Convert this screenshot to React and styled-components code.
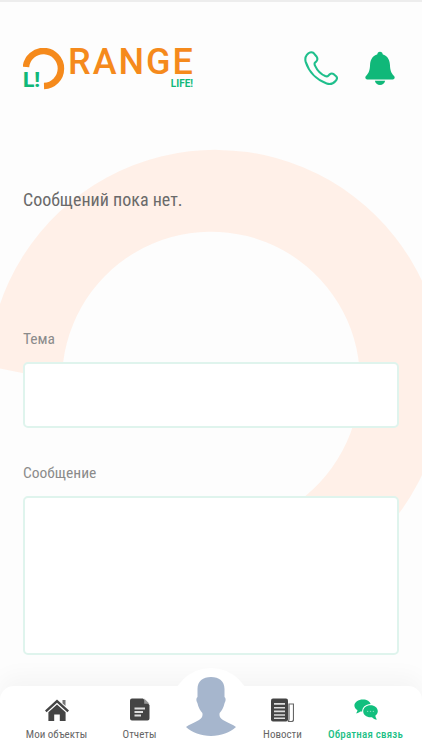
import React from 'react';
import styled, { createGlobalStyle } from 'styled-components';

const GREEN = '#10b879';
const ORANGE = '#f58a1c';

const GlobalStyle = createGlobalStyle`
  html, body {
    margin: 0;
    padding: 0;
    background: #fdfdfd;
  }
  * {
    box-sizing: border-box;
  }
`;

const Page = styled.div`
  position: relative;
  width: 422px;
  height: 750px;
  overflow: hidden;
  display: flex;
  flex-direction: column;
  background: #fdfdfd;
  border-top: 2px solid #ededed;
  font-family: "Roboto", sans-serif;
  font-stretch: 75%;
`;

const Ring = styled.svg`
  position: absolute;
  top: -2px;
  left: 0;
`;

const Header = styled.header`
  position: relative;
  display: flex;
  justify-content: space-between;
  align-items: flex-start;
  padding: 46px 27px 0 23px;
  height: 186px;
`;

const Logo = styled.div`
  position: relative;
  width: 170px;
  height: 42px;
  padding-left: 45px;
`;

const LogoRing = styled.svg`
  position: absolute;
  top: 0;
  left: 0;
`;

const LogoBadge = styled.span`
  position: absolute;
  left: 0;
  top: 23px;
  font: 800 21px/18px "Roboto", sans-serif;
  color: ${GREEN};
`;

const LogoWord = styled.div`
  font: 500 36px/28px "Roboto", sans-serif;
  letter-spacing: 2px;
  color: ${ORANGE};
`;

const LogoSub = styled.div`
  font: 700 10px/10px "Roboto", sans-serif;
  color: ${GREEN};
  text-align: right;
  margin-top: 3px;
`;

const HeaderActions = styled.div`
  display: flex;
  align-items: center;
  gap: 27px;
  padding-top: 2px;
`;

const Main = styled.main`
  position: relative;
  flex: 1;
  padding: 0 23px;
  min-height: 0;
`;

const Notice = styled.p`
  margin: 0 0 118px;
  height: 24px;
  font-size: 18px;
  line-height: 24px;
  color: #6a6a6a;
`;

const Field = styled.div`
  margin-bottom: 36px;
`;

const Label = styled.label`
  display: block;
  margin-bottom: 14px;
  font-size: 15.5px;
  line-height: 18px;
  color: #8b8b8b;
`;

const Input = styled.div`
  width: 376px;
  height: ${props => props.$height}px;
  background: #fff;
  border: 2px solid #dff4ed;
  border-radius: 5px;
`;

const Nav = styled.nav`
  position: relative;
  display: flex;
  justify-content: center;
  height: 64px;
  padding: 0 15px;
  background: #fff;
  border-radius: 14px 14px 0 0;
  box-shadow: 0 -10px 22px rgba(0, 0, 0, 0.035);
`;

const NavItem = styled.div`
  width: 83px;
  display: flex;
  flex-direction: column;
  align-items: center;
  justify-content: flex-end;
  padding-bottom: 9px;
  font-size: 11px;
  line-height: 12px;
  white-space: nowrap;
  color: ${props => (props.$active ? '#1cbf86' : '#666')};
  font-weight: ${props => (props.$active ? 500 : 400)};
  letter-spacing: ${props => (props.$active ? '0.2px' : '0')};
`;

const NavIcon = styled.div`
  height: 25px;
  margin-bottom: 7px;
  display: flex;
  align-items: center;
  justify-content: center;
`;

const AvatarSlot = styled.div`
  width: 60px;
`;

const AvatarBump = styled.div`
  position: absolute;
  left: 171px;
  top: -18px;
  width: 80px;
  height: 80px;
  border-radius: 50%;
  background: #fff;
  display: flex;
  justify-content: center;
  padding-top: 9px;
`;

const PhoneIcon = () => (
  <svg width="34" height="37" viewBox="0 0 36 38" fill="none" stroke="#1fbf8c" strokeWidth="2.2" strokeLinejoin="round">
    <path d="M3 4.5 C5 2 8 1 10 2.5 L13 6 C14.5 8 14.5 10 13 11.5 L11.5 13 C11 14 11 15 11.8 16.2 C14 21 18 25 22.5 27 C24 27.6 25 27.4 26 26.4 L27.2 25.2 C28.6 24 30 24 31.5 25 L34 27.2 C35.2 28.4 35 30.5 33.4 32.2 C31 35 27.5 36 24 34.8 C13 31 5 22 1.8 12 C1 9 1.4 6.5 3 4.5 Z" />
  </svg>
);

const BellIcon = () => (
  <svg width="30" height="35" viewBox="0 0 32 36" fill={GREEN}>
    <circle cx="16" cy="3" r="2.8" />
    <path d="M16 2.5 C23 2.5 26.4 8 26.6 14 C26.8 20 28 23 31 26 C32.3 27.4 31.6 29.6 29.6 29.6 H2.4 C0.4 29.6 -0.3 27.4 1 26 C4 23 5.2 20 5.4 14 C5.6 8 9 2.5 16 2.5 Z" />
    <path d="M10.5 31 H21.5 C21 33.8 18.8 35.5 16 35.5 C13.2 35.5 11 33.8 10.5 31 Z" />
  </svg>
);

const HomeIcon = () => (
  <svg width="24" height="22" viewBox="0 0 24 22" fill="#444">
    <path d="M12 0.5 L24 11.5 L22.4 13.2 L12 3.8 L1.6 13.2 L0 11.5 Z" />
    <path d="M17.5 1 H20.5 V7 L17.5 4.2 Z" fill="#777" />
    <path d="M12 5.6 L20.6 13.3 V22 H14.8 V15.4 H9.2 V22 H3.4 V13.3 Z" />
  </svg>
);

const FileIcon = () => (
  <svg width="20" height="23" viewBox="0 0 20 23">
    <path d="M2 0.5 H13 L19.5 7 V20.5 A2 2 0 0 1 17.5 22.5 H2 A2 2 0 0 1 0 20.5 V2.5 A2 2 0 0 1 2 0.5 Z" fill="#444" />
    <path d="M14.2 0.5 L19.5 5.8 H14.2 Z" fill="#999" />
    <path d="M4.5 9.5 H15 V11.4 H4.5 Z M4.5 13 H13 V14.9 H4.5 Z M4.5 16.5 H11 V18.4 H4.5 Z" fill="#ddd" />
  </svg>
);

const NewsIcon = () => (
  <svg width="23" height="24" viewBox="0 0 23 24">
    <rect x="0" y="0.5" width="17" height="23" rx="2" fill="#444" />
    <path d="M3 5 H14 V6.8 H3 Z M3 9 H14 V10.6 H3 Z M3 12.6 H14 V14.2 H3 Z M3 16.2 H14 V17.8 H3 Z M3 19.4 H14 V21 H3 Z" fill="#ddd" />
    <path d="M18 6 H22.5 V21.5 A2 2 0 0 1 20.5 23.5 H17 C18 23 18 22 18 21 Z" fill="none" stroke="#666" strokeWidth="1.2" />
  </svg>
);

const ChatIcon = () => (
  <svg width="24" height="22" viewBox="0 0 24 22" fill="#12bf7e">
    <path d="M9 0.5 C13 0.5 16 2.5 16.6 5 C11.5 5.2 8 8.6 8.2 12.6 C7.6 12.6 7 12.5 6.4 12.4 C5 13.6 3.5 14.2 2 14.2 C3 13.2 3.4 12.2 3.4 11 C1.4 9.8 0.4 8.2 0.4 6.4 C0.4 3.2 4.2 0.5 9 0.5 Z" />
    <path d="M16.5 6.2 C20.6 6.2 23.8 8.8 23.8 12.2 C23.8 14 22.8 15.6 21.4 16.6 C21.4 18 21.9 19.4 23 20.6 C21 20.4 19.4 19.6 18 18.2 C17.5 18.3 17 18.3 16.5 18.3 C12.4 18.3 9.2 15.6 9.2 12.2 C9.2 8.8 12.4 6.2 16.5 6.2 Z" />
    <circle cx="13.6" cy="12.4" r="0.7" fill="#7fdcb8" />
    <circle cx="16.5" cy="12.4" r="0.7" fill="#7fdcb8" />
    <circle cx="19.4" cy="12.4" r="0.7" fill="#7fdcb8" />
  </svg>
);

const AvatarIcon = () => (
  <svg width="50" height="59" viewBox="0 0 50 59" fill="#a6b6cd">
    <path d="M25 0 C33 0 38.5 4 38.5 12 V20 C40 21 40 24 38.6 26 C37.6 31 35.6 33.8 33.6 36 C33 39 34 41 37 43 C42 46 47 47.5 50 50 C44 55.5 35 59 25 59 C15 59 6 55.5 0 50 C3 47.5 8 46 13 43 C16 41 17 39 16.4 36 C14.4 33.8 12.4 31 11.4 26 C10 24 10 21 11.5 20 V12 C11.5 4 17 0 25 0 Z" />
  </svg>
);

const navLeft = [
  { label: 'Мои объекты', icon: <HomeIcon /> },
  { label: 'Отчеты', icon: <FileIcon /> }
];

const navRight = [
  { label: 'Новости', icon: <NewsIcon /> },
  { label: 'Обратная связь', icon: <ChatIcon />, active: true }
];

const App = () => {
  return (
    <Page>
      <GlobalStyle />
      <Ring width="422" height="750" viewBox="0 0 422 750">
        <path
          d="M -12 366 A 228 228 0 1 1 340 569 L 290 507 A 149 149 0 1 0 62 381 Z"
          fill="#fff0e8"
        />
      </Ring>
      <Header>
        <Logo>
          <LogoRing width="42" height="42" viewBox="0 0 42 42" fill="none">
            <path d="M 3 19 A 17.5 17.5 0 1 1 21 38" stroke={ORANGE} strokeWidth="6.5" />
          </LogoRing>
          <LogoBadge>L!</LogoBadge>
          <LogoWord>RANGE</LogoWord>
          <LogoSub>LIFE!</LogoSub>
        </Logo>
        <HeaderActions>
          <PhoneIcon />
          <BellIcon />
        </HeaderActions>
      </Header>
      <Main>
        <Notice>Сообщений пока нет.</Notice>
        <Field>
          <Label>Тема</Label>
          <Input $height={66} />
        </Field>
        <Field>
          <Label>Сообщение</Label>
          <Input $height={159} />
        </Field>
      </Main>
      <Nav>
        <AvatarBump>
          <AvatarIcon />
        </AvatarBump>
        {navLeft.map(item => (
          <NavItem key={item.label}>
            <NavIcon>{item.icon}</NavIcon>
            {item.label}
          </NavItem>
        ))}
        <AvatarSlot />
        {navRight.map(item => (
          <NavItem key={item.label} $active={item.active}>
            <NavIcon>{item.icon}</NavIcon>
            {item.label}
          </NavItem>
        ))}
      </Nav>
    </Page>
  );
};

export default App;
